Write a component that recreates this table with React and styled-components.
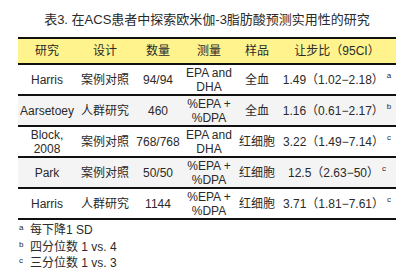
import React from 'react'
import styled, { createGlobalStyle } from 'styled-components'

const GlobalStyle = createGlobalStyle`
  html,
  body {
    margin: 0;
    background: #fff;
  }

  body {
    font-family: "Liberation Sans", "Noto Sans CJK SC", sans-serif;
    color: #2a2a2a;
  }
`

const columns = '58px 58px 48px 54px 42px 118px'

const Page = styled.div`
  width: 378px;
  padding: 10px 0 0 18px;
`

const Title = styled.h1`
  margin: 0 0 8px;
  font-size: 13px;
  font-weight: 400;
  line-height: 19px;
  text-align: center;
  color: #2a2a2a;
`

const Table = styled.div`
  display: grid;
  border-top: 2px solid #111;
`

const Row = styled.div`
  display: grid;
  grid-template-columns: ${columns};
  height: ${(p) => (p.$head ? '24px' : '29px')};
  background: ${(p) => (p.$head ? '#fff38e' : p.$shaded ? '#f4f4f4' : '#fff')};
  border-bottom: 2px solid #111;
`

const Cell = styled.div`
  display: flex;
  align-items: center;
  justify-content: center;
  text-align: center;
  font-size: 12px;
  line-height: 14px;
  white-space: pre-line;
`

const Ratio = styled.span`
  white-space: nowrap;
`

const Sup = styled.sup`
  font-size: 8px;
  line-height: 0;
  margin-left: 3px;
  vertical-align: 6px;
`

const Notes = styled.div`
  margin-top: 3px;
  font-size: 12px;
  line-height: 15.5px;
`

const Note = styled.div`
  display: flex;
  align-items: baseline;
`

const NoteMark = styled.span`
  width: 11px;
  padding-left: 1px;
  font-size: 8px;
  position: relative;
  top: -4px;
`

const headers = ['研究', '设计', '数量', '测量', '样品', '让步比（95CI）']

const rows = [
  ['Harris', '案例对照', '94/94', 'EPA and\nDHA', '全血', '1.49（1.02−2.18）', 'a'],
  ['Aarsetoey', '人群研究', '460', '%EPA +\n%DPA', '全血', '1.16（0.61−2.17）', 'b'],
  ['Block,\n2008', '案例对照', '768/768', 'EPA and\nDHA', '红细胞', '3.22（1.49−7.14）', 'c'],
  ['Park', '案例对照', '50/50', '%EPA +\n%DPA', '红细胞', '12.5（2.63−50）', 'c'],
  ['Harris', '人群研究', '1144', '%EPA +\n%DPA', '红细胞', '3.71（1.81−7.61）', 'c']
]

const notes = [
  ['a', '每下降1 SD'],
  ['b', '四分位数 1 vs. 4'],
  ['c', '三分位数 1 vs. 3']
]

const App = () => {
  return (
    <Page>
      <GlobalStyle />
      <Title>表3. 在ACS患者中探索欧米伽-3脂肪酸预测实用性的研究</Title>
      <Table>
        <Row $head>
          {headers.map((h) => (
            <Cell key={h}>{h}</Cell>
          ))}
        </Row>
        {rows.map((r, i) => (
          <Row key={i} $shaded={i % 2 === 1}>
            {r.slice(0, 5).map((v, j) => (
              <Cell key={j}>{v}</Cell>
            ))}
            <Cell>
              <Ratio>
                {r[5]}
                <Sup>{r[6]}</Sup>
              </Ratio>
            </Cell>
          </Row>
        ))}
      </Table>
      <Notes>
        {notes.map(([m, t]) => (
          <Note key={m}>
            <NoteMark>{m}</NoteMark>
            {t}
          </Note>
        ))}
      </Notes>
    </Page>
  )
}

export default App
